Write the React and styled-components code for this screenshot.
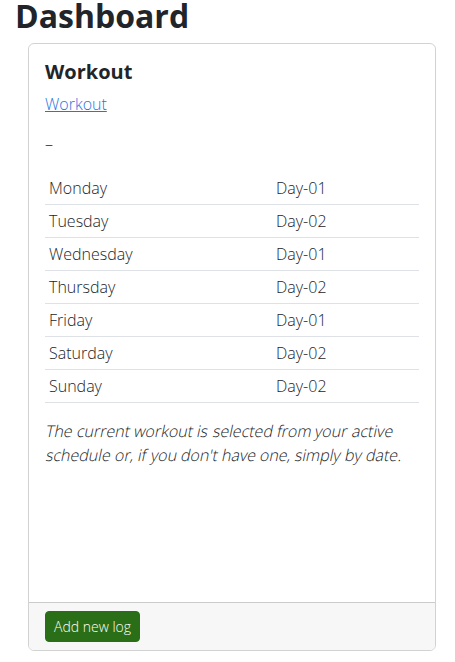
import React from "react";
import styled, { createGlobalStyle } from "styled-components";

const GlobalStyle = createGlobalStyle`
  html, body { margin: 0; padding: 0; background: #fff; }
  body {
    font-family: "Open Sans", "Liberation Sans", sans-serif;
    font-weight: 300;
    font-size: 16px;
    line-height: 1.5;
    color: #212529;
  }
  * { box-sizing: border-box; }
`;

const Page = styled.main`
  padding: 0 19px 0 15px;
`;

const Title = styled.h1`
  margin: 0 0 11px 0;
  font-size: 32px;
  font-weight: 700;
  line-height: 32px;
  color: #212529;
`;

const Card = styled.section`
  margin-left: 13px;
  width: 408px;
  height: 608px;
  display: flex;
  flex-direction: column;
  border: 1px solid rgba(0, 0, 0, 0.175);
  border-radius: 6px;
  overflow: hidden;
`;

const CardBody = styled.div`
  flex: 1;
  padding: 16px;
`;

const CardTitle = styled.h5`
  margin: 0 0 8px 0;
  font-size: 20px;
  font-weight: 700;
  line-height: 1.2;
  color: #212529;
`;

const Para = styled.p`
  margin: 0 0 16px 0;
`;

/* the reference shows a synthesized oblique of the upright face */
const SlantWord = styled.span`
  display: inline-block;
  transform: skewX(-12deg);
  transform-origin: 0 75%;
`;

const Link = styled.a`
  color: #2a72e4;
  text-decoration: underline;
`;

const Table = styled.table`
  width: 100%;
  border-collapse: collapse;
  margin-bottom: 16px;
`;

const Row = styled.tr`
  border-bottom: 1px solid #dee2e6;
`;

const Cell = styled.td`
  padding: 4px;
  vertical-align: top;
  width: ${(p) => p.$width || "auto"};
`;

const Footer = styled.div`
  padding: 8px 16px;
  background: #f7f7f7;
  border-top: 1px solid rgba(0, 0, 0, 0.175);
`;

const Button = styled.button`
  font-family: inherit;
  font-weight: 300;
  font-size: 14px;
  line-height: 1.5;
  padding: 4px 8px;
  color: #fff;
  background: #2a6e17;
  border: 1px solid #2a6e17;
  border-radius: 4px;
  cursor: pointer;
`;

const schedule = [
  ["Monday", "Day-01"],
  ["Tuesday", "Day-02"],
  ["Wednesday", "Day-01"],
  ["Thursday", "Day-02"],
  ["Friday", "Day-01"],
  ["Saturday", "Day-02"],
  ["Sunday", "Day-02"],
];

const note =
  "The current workout is selected from your active schedule or, if you don't have one, simply by date.";

export default function App() {
  const words = note.split(" ");
  return (
    <>
      <GlobalStyle />
      <Page>
        <Title>Dashboard</Title>
        <Card>
          <CardBody>
            <CardTitle>Workout</CardTitle>
            <Para>
              <Link href="#">Workout</Link>
            </Para>
            <Para>–</Para>
            <Table>
              <tbody>
                {schedule.map(([day, w]) => (
                  <Row key={day}>
                    <Cell $width="227px">{day}</Cell>
                    <Cell>{w}</Cell>
                  </Row>
                ))}
              </tbody>
            </Table>
            <Para>
              {words.map((w, i) => (
                <React.Fragment key={i}>
                  <SlantWord>{w}</SlantWord>
                  {i < words.length - 1 ? " " : ""}
                </React.Fragment>
              ))}
            </Para>
          </CardBody>
          <Footer>
            <Button>Add new log</Button>
          </Footer>
        </Card>
      </Page>
    </>
  );
}
